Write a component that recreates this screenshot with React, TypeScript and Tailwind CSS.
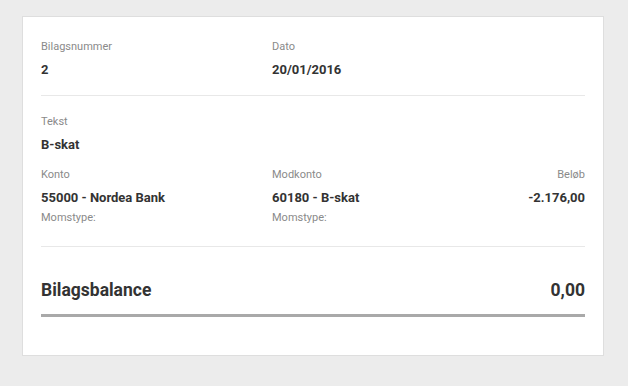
const labelCls = 'block text-[11px] leading-[14px] text-[#8a8a8a]'
const valueCls = 'block text-[13px] leading-[16px] font-bold text-[#333]'

function Field({ label, value, right }: { label: string; value: string; right?: boolean }) {
  return (
    <div className={right ? 'text-right' : ''}>
      <span className={labelCls}>{label}</span>
      <span className={`${valueCls} mt-2`}>{value}</span>
    </div>
  )
}

export default function App() {
  return (
    <div className="min-h-screen w-full bg-[#ececec] pt-4 pl-[22px]" style={{ fontFamily: 'Roboto, "Noto Sans", sans-serif' }}>
      <div className="w-[582px] bg-white border border-[#dedede] px-[18px] pt-[23px] pb-[38px]">
        {/* Bilagsnummer / Dato */}
        <div className="flex">
          <div className="w-[231px]">
            <Field label="Bilagsnummer" value="2" />
          </div>
          <Field label="Dato" value="20/01/2016" />
        </div>
        <div className="mt-[17px] h-px bg-[#e8e8e8]" />

        {/* Tekst */}
        <div className="mt-[19px]">
          <Field label="Tekst" value="B-skat" />
        </div>

        {/* Konto linje */}
        <div className="mt-[15px] flex">
          <div className="w-[231px]">
            <Field label="Konto" value="55000 - Nordea Bank" />
            <span className={`${labelCls} mt-[5px]`}>Momstype:</span>
          </div>
          <div className="flex-1">
            <Field label="Modkonto" value="60180 - B-skat" />
            <span className={`${labelCls} mt-[5px]`}>Momstype:</span>
          </div>
          <Field label="Beløb" value="-2.176,00" right />
        </div>
        <div className="mt-[21px] h-px bg-[#e8e8e8]" />

        {/* Balance */}
        <div className="mt-[32px] flex items-center justify-between text-[17.5px] leading-[22px] font-bold text-[#333]">
          <span>Bilagsbalance</span>
          <span>0,00</span>
        </div>
        <div className="mt-[13px] h-[3px] bg-[#a9a9a9]" />
      </div>
    </div>
  )
}
